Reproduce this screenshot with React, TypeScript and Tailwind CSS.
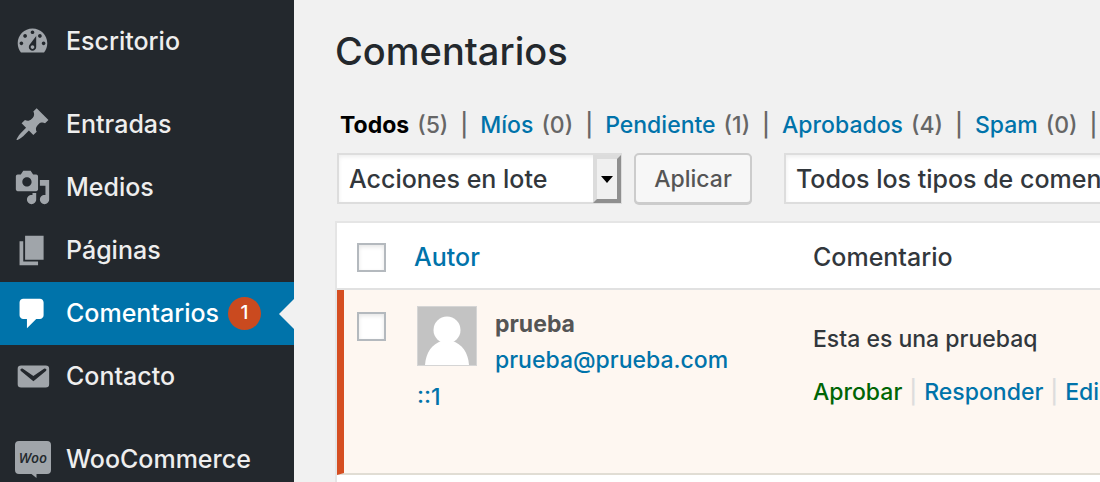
import type { ReactNode } from "react";
import clsx from "clsx";

type MenuItem = {
  label: string;
  icon: ReactNode;
  count?: number;
  active?: boolean;
};

function Dashicon({ d }: { d: string }) {
  return (
    <svg viewBox="0 0 20 20" className="size-[37px] shrink-0" fill="currentColor" fillRule="evenodd" aria-hidden="true">
      <path d={d} />
    </svg>
  );
}

function WooIcon() {
  return (
    <svg viewBox="0 0 37 37" className="size-[37px] shrink-0" aria-hidden="true">
      <path
        fill="currentColor"
        d="M5 0h28a4 4 0 0 1 4 4v25a4 4 0 0 1-4 4H22.500v4l-5-4H5a4 4 0 0 1-4-4V4a4 4 0 0 1 4-4z"
      />
      <text
        x="19"
        y="22"
        textAnchor="middle"
        fill="#23282d"
        className="font-['Open_Sans',sans-serif] text-[14px] font-semibold italic"
      >
        Woo
      </text>
    </svg>
  );
}

const menuGroups: MenuItem[][] = [
  [
    {
      label: "Escritorio",
      icon: (
        <Dashicon d="M3.76 16h12.48c1.1-1.37 1.76-3.11 1.76-5 0-4.42-3.58-8-8-8s-8 3.58-8 8c0 1.89.66 3.63 1.76 5zM10 4c.55 0 1 .45 1 1s-.45 1-1 1-1-.45-1-1 .45-1 1-1zM6 6c.55 0 1 .45 1 1s-.45 1-1 1-1-.45-1-1 .45-1 1-1zm8 0c.55 0 1 .45 1 1s-.45 1-1 1-1-.45-1-1 .45-1 1-1zm-5.37 5.55L12 7v6c0 1.1-.9 2-2 2s-2-.9-2-2c0-.57.24-1.08.63-1.45zM4 10c.55 0 1 .45 1 1s-.45 1-1 1-1-.45-1-1 .45-1 1-1zm12 0c.55 0 1 .45 1 1s-.45 1-1 1-1-.45-1-1 .45-1 1-1zm-5 3c0-.55-.45-1-1-1s-1 .45-1 1 .45 1 1 1 1-.45 1-1z" />
      ),
    },
  ],
  [
    {
      label: "Entradas",
      icon: (
        <Dashicon d="M10.44 3.02l1.82-1.82 6.36 6.35-1.83 1.82c-1.05-.68-2.48-.57-3.41.36l-.75.75c-.92.93-1.04 2.35-.35 3.41l-1.83 1.82-2.41-2.41-2.8 2.79c-.42.42-3.38 2.71-3.8 2.29s1.86-3.39 2.28-3.81l2.79-2.79L4.1 9.36l1.83-1.82c1.05.69 2.48.57 3.4-.36l.75-.75c.93-.92 1.05-2.35.36-3.41z" />
      ),
    },
    {
      label: "Medios",
      icon: (
        <Dashicon d="M13 11V4c0-.55-.45-1-1-1h-1.67L9 1H5L3.67 3H2c-.55 0-1 .45-1 1v7c0 .55.45 1 1 1h10c.55 0 1-.45 1-1zM7 4.5c1.38 0 2.5 1.12 2.5 2.5S8.38 9.5 7 9.5 4.5 8.38 4.5 7 5.62 4.5 7 4.5zM14 6h5v10.5c0 1.38-1.12 2.5-2.5 2.5S14 17.88 14 16.5s1.12-2.5 2.5-2.5c.17 0 .34.02.5.05V9h-3V6zm-4 8.05V13h2v3.5c0 1.38-1.12 2.5-2.5 2.5S7 17.88 7 16.5 8.12 14 9.5 14c.17 0 .34.02.5.05z" />
      ),
    },
    {
      label: "Páginas",
      icon: <Dashicon d="M6 15V2h10v13H6zm-1 1h8v2H3V5h2v11z" />,
    },
    {
      label: "Comentarios",
      count: 1,
      active: true,
      icon: (
        <Dashicon d="M5 2h9c1.1 0 2 .9 2 2v7c0 1.1-.9 2-2 2h-2l-5 5v-5H5c-1.1 0-2-.9-2-2V4c0-1.1.9-2 2-2z" />
      ),
    },
    {
      label: "Contacto",
      icon: (
        <Dashicon d="M3.87 4h13.25C18.37 4 19 4.59 19 5.79v8.42c0 1.19-.63 1.79-1.88 1.79H3.87c-1.25 0-1.88-.6-1.88-1.79V5.79c0-1.2.63-1.79 1.88-1.79zm6.62 8.6l6.74-5.53c.24-.2.43-.66.13-1.07-.29-.41-.82-.42-1.17-.17l-5.7 3.86L4.8 5.83c-.35-.25-.88-.24-1.17.17-.3.41-.11.87.13 1.07z" />
      ),
    },
  ],
  [{ label: "WooCommerce", icon: <WooIcon /> }],
];

const filters = [
  { label: "Todos", count: 5, current: true },
  { label: "Míos", count: 0 },
  { label: "Pendiente", count: 1 },
  { label: "Aprobados", count: 4 },
  { label: "Spam", count: 0 },
  { label: "Papelera", count: 0 },
];

function Sidebar() {
  return (
    <nav className="flex w-[294px] shrink-0 flex-col gap-5 bg-[#23282d] pt-[10px]">
      {menuGroups.map((group, i) => (
        <ul key={i}>
          {group.map((item) => (
            <li key={item.label}>
              <a
                href="#"
                className={clsx(
                  "relative flex h-[63px] items-center gap-[15px] pl-[14px] text-[25px]",
                  item.active ? "bg-[#0073aa] text-white" : "text-[#eeeeee]"
                )}
              >
                <span className={item.active ? "text-white" : "text-[#a0a5aa]"}>{item.icon}</span>
                {item.label}
                {item.count && (
                  <span className="-ml-[6px] flex size-[33px] items-center justify-center rounded-full bg-[#ca4a1f] text-[19px] font-medium">
                    {item.count}
                  </span>
                )}
                {item.active && (
                  <span className="absolute top-1/2 right-0 -translate-y-1/2 border-y-[15px] border-r-[15px] border-y-transparent border-r-[#f1f1f1]" />
                )}
              </a>
            </li>
          ))}
        </ul>
      ))}
    </nav>
  );
}

function Filters() {
  return (
    <ul className="mt-8 flex pl-[5px] text-[23px] leading-[36px] whitespace-nowrap text-[#666666]">
      {filters.map((filter, i) => (
        <li key={filter.label} className="flex">
          {i > 0 && <span className="px-3">|</span>}
          <a href="#" className={filter.current ? "font-bold text-black" : "text-[#0073aa]"}>
            {filter.label}
          </a>
          <span className="pl-2">({filter.count})</span>
        </li>
      ))}
    </ul>
  );
}

function Checkbox({ label }: { label: string }) {
  return (
    <input
      type="checkbox"
      aria-label={label}
      className="block size-[29px] appearance-none border-2 border-[#b4b9be] bg-white shadow-[inset_0_2px_4px_rgba(0,0,0,0.1)]"
    />
  );
}

const selectClass =
  "h-[51px] appearance-none border-2 border-[#dddddd] bg-white pt-[2px] pl-[10px] text-[25px] text-[#32373c] shadow-[inset_0_2px_4px_rgba(0,0,0,0.07)]";

function ArrowBox() {
  return (
    <span className="pointer-events-none absolute top-[2px] right-px bottom-px flex w-[28px] items-center justify-center border-4 border-t-[#dcdcdc] border-r-[#8f8f8f] border-b-[#8f8f8f] border-l-[#dcdcdc] bg-[#f0f0f0]">
      <span className="border-x-[6px] border-t-[7px] border-x-transparent border-t-black" />
    </span>
  );
}

function BulkActions() {
  return (
    <div className="mt-[10px] flex pl-[2px]">
      <div className="relative w-[285px] shrink-0">
        <select aria-label="Acciones en lote" className={clsx(selectClass, "w-full")}>
          <option>Acciones en lote</option>
          <option>Rechazar</option>
          <option>Aprobar</option>
        </select>
        <ArrowBox />
      </div>
      <button
        type="button"
        className="ml-3 h-[51px] w-[118px] shrink-0 rounded-[5px] border-2 border-[#cccccc] bg-[#f7f7f7] pt-[2px] text-[23px] text-[#555555] shadow-[0_1px_0_#cccccc]"
      >
        Aplicar
      </button>
      <div className="relative ml-8 w-[420px] shrink-0">
        <select aria-label="Filtrar por tipo de comentario" className={clsx(selectClass, "w-full")}>
          <option>Todos los tipos de comentarios</option>
          <option>Comentarios</option>
          <option>Pings</option>
        </select>
        <ArrowBox />
      </div>
    </div>
  );
}

function CommentsTable() {
  return (
    <table className="mt-[17px] w-[1200px] table-fixed border-separate border-spacing-0 border-2 border-[#e5e5e5] bg-white text-left text-[25px] leading-[36px]">
      <thead>
        <tr className="h-[67px] text-[#32373c]">
          <th className="w-[77px] border-b-2 border-[#e1e1e1] pt-1 pl-5">
            <Checkbox label="Seleccionar todos" />
          </th>
          <th className="w-[399px] border-b-2 border-[#e1e1e1] pt-[2px] font-[450]">
            <a href="#" className="text-[#0073aa]">
              Autor
            </a>
          </th>
          <th className="border-b-2 border-[#e1e1e1] pt-[2px] font-[450]">Comentario</th>
        </tr>
      </thead>
      <tbody>
        <tr className="h-[185px] bg-[#fef7f1] align-top">
          <td className="border-b-2 border-l-[7px] border-b-[#e1ddd4] border-l-[#d54e21] pt-[22px] pl-[13px]">
            <Checkbox label="Seleccionar comentario de prueba" />
          </td>
          <td className="border-b-2 border-[#e1ddd4] pt-4 pl-[3px]">
            <svg viewBox="0 0 60 60" className="float-left mr-[18px] size-[60px]" aria-hidden="true">
              <rect width="60" height="60" fill="#d5d5d5" />
              <rect x="1" y="1" width="58" height="58" fill="#c3c3c3" />
              <circle cx="30" cy="24" r="13.500" fill="#fff" />
              <path fill="#fff" d="M8 59c1-13 7-21 17-24h10c10 3 16 11 17 24z" />
            </svg>
            <strong className="block text-[23px] font-bold text-[#555555]">prueba</strong>
            <a href="#" className="block text-[23px] text-[#0073aa]">
              prueba@prueba.com
            </a>
            <a href="#" className="text-[23px] text-[#0073aa]">
              ::1
            </a>
          </td>
          <td className="border-b-2 border-[#e1ddd4] pt-[31px]">
            <p className="text-[23px] text-[#32373c]">Esta es una pruebaq</p>
            <div className="mt-[17px] flex text-[23px] text-[#0073aa]">
              <a href="#" className="text-[#006505]">
                Aprobar
              </a>
              <span className="px-[7px] text-[#dddddd]">|</span>
              <a href="#">Responder</a>
              <span className="px-[7px] text-[#dddddd]">|</span>
              <a href="#">Edición rápida</a>
            </div>
          </td>
        </tr>
        <tr className="h-[185px]">
          <td colSpan={3} />
        </tr>
      </tbody>
    </table>
  );
}

export default function App() {
  return (
    <div className="flex h-screen overflow-hidden bg-[#f1f1f1] font-[Inter,sans-serif]">
      <div className="flex min-w-0 flex-1 font-[450]">
        <Sidebar />
        <main className="min-w-0 flex-1 overflow-hidden pt-[27px] pl-[41px]">
          <h1 className="text-[38px] leading-[48px] text-[#23282d]">Comentarios</h1>
          <Filters />
          <BulkActions />
          <CommentsTable />
        </main>
      </div>
    </div>
  );
}
